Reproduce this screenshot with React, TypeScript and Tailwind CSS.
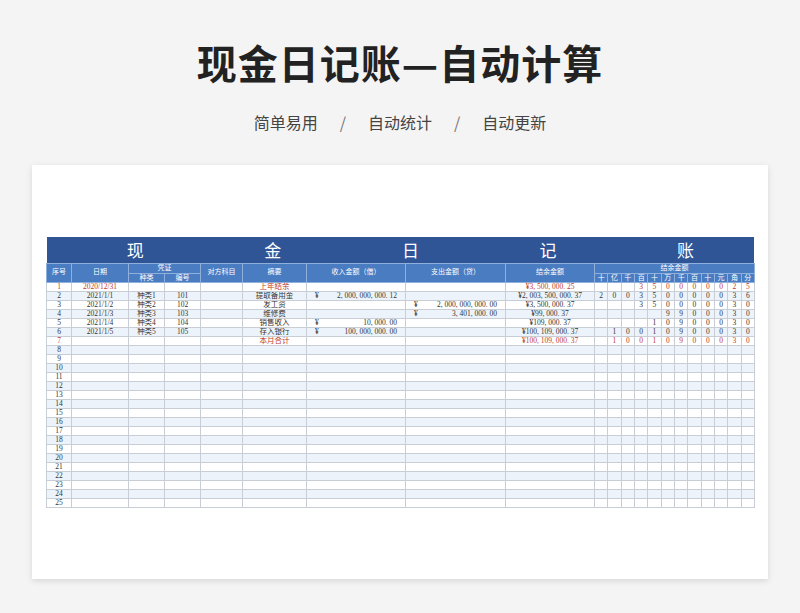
import React from "react";

const cols = [25, 57, 36, 36, 42, 64, 99, 100, 89, ...Array(12).fill(160 / 12)];
const digitsHead = ["十", "亿", "千", "百", "十", "万", "千", "百", "十", "元", "角", "分"];
type R = { d?: string; k?: string; n?: string; s?: string; inc?: string; out?: string; bal?: string; dg?: string; red?: boolean };
const data: R[] = [
  { d: "2020/12/31", s: "上年结余", bal: "¥3, 500, 000. 25", dg: "___350000025", red: true },
  { d: "2021/1/1", k: "种类1", n: "101", s: "提取备用金", inc: "2, 000, 000, 000. 12", bal: "¥2, 003, 500, 000. 37", dg: "200350000036" },
  { d: "2021/1/2", k: "种类2", n: "102", s: "发工资", out: "2, 000, 000, 000. 00", bal: "¥3, 500, 000. 37", dg: "___350000030" },
  { d: "2021/1/3", k: "种类3", n: "103", s: "维修费", out: "3, 401, 000. 00", bal: "¥99, 000. 37", dg: "_____9900030" },
  { d: "2021/1/4", k: "种类4", n: "104", s: "销售收入", inc: "10, 000. 00", bal: "¥109, 000. 37", dg: "____10900030" },
  { d: "2021/1/5", k: "种类5", n: "105", s: "存入银行", inc: "100, 000, 000. 00", bal: "¥100, 109, 000. 37", dg: "_10010900030" },
  { s: "本月合计", bal: "¥100, 109, 000. 37", dg: "_10010900030", red: true },
];

const td = "border border-[#c9ced6] h-[9px] p-0 leading-[8px] text-center overflow-hidden whitespace-nowrap";
const th = "border border-[#8fb0dd] p-0 text-center font-normal text-white whitespace-nowrap overflow-hidden";

export default function App() {
  const rows: R[] = [...data, ...Array(18).fill({})];
  return (
    <div className="w-[800px] h-[613px] bg-[#f4f4f4] flex flex-col items-center" style={{ fontFamily: '"Noto Sans CJK SC", sans-serif' }}>
      <h1 className="mt-[36px] text-[40px] leading-[52px] font-bold text-[#222] tracking-[1px]">现金日记账—自动计算</h1>
      <div className="mt-[22px] text-[16px] leading-[24px] text-[#444] flex gap-[22px]">
        <span>简单易用</span><span className="text-[#777]">/</span><span>自动统计</span><span className="text-[#777]">/</span><span>自动更新</span>
      </div>
      <div className="mt-[31px] w-[736px] h-[414px] bg-white shadow-[0_2px_6px_rgba(0,0,0,0.12)] pt-[72px] pl-[14px]">
        <table className="table-fixed border-collapse text-[7.5px] text-[#333]" style={{ width: 708, fontFamily: '"Liberation Serif", "Noto Sans CJK SC", serif' }}>
          <colgroup>{cols.map((w, i) => <col key={i} style={{ width: w }} />)}</colgroup>
          <thead>
            <tr className="bg-[#2f5597] h-[25px]">
              <th colSpan={21} className="p-0 font-normal text-white text-[17px]">
                <div className="flex justify-around pl-[20px]" style={{ fontFamily: '"Noto Sans CJK SC", serif' }}>
                  {["现", "金", "日", "记", "账"].map((c) => <span key={c}>{c}</span>)}
                </div>
              </th>
            </tr>
            <tr className="bg-[#4a7cc2] h-[10px] leading-[9px] text-[7px]">
              <th rowSpan={2} className={th}>序号</th>
              <th rowSpan={2} className={th}>日期</th>
              <th colSpan={2} className={th}>凭证</th>
              <th rowSpan={2} className={th}>对方科目</th>
              <th rowSpan={2} className={th}>摘要</th>
              <th rowSpan={2} className={th}>收入金额（借）</th>
              <th rowSpan={2} className={th}>支出金额（贷）</th>
              <th rowSpan={2} className={th}>结余金额</th>
              <th colSpan={12} className={th}>结余金额</th>
            </tr>
            <tr className="bg-[#4a7cc2] h-[9px] leading-[8px] text-[7px]">
              <th className={th}>种类</th>
              <th className={th}>编号</th>
              {digitsHead.map((c, i) => <th key={i} className={th}>{c}</th>)}
            </tr>
          </thead>
          <tbody>
            {rows.map((r, i) => {
              const red = r.red ? "text-[#c0392b]" : "";
              const dg = r.dg ? r.dg.split("") : Array(12).fill("_");
              return (
                <tr key={i} className={i % 2 === 1 ? "bg-[#edf3fb]" : "bg-white"}>
                  <td className={`${td} ${red}`}>{i + 1}</td>
                  <td className={`${td} ${red}`}>{r.d}</td>
                  <td className={td}>{r.k}</td>
                  <td className={td}>{r.n}</td>
                  <td className={td}></td>
                  <td className={`${td} ${red}`}>{r.s}</td>
                  <td className={td}>{r.inc && <div className="flex justify-between px-[8px]"><span>¥</span><span>{r.inc}</span></div>}</td>
                  <td className={td}>{r.out && <div className="flex justify-between px-[8px]"><span>¥</span><span>{r.out}</span></div>}</td>
                  <td className={`${td} ${red}`}>{r.bal}</td>
                  {dg.map((c, j) => <td key={j} className={`${td} ${red}`}>{c === "_" ? "" : c}</td>)}
                </tr>
              );
            })}
          </tbody>
        </table>
      </div>
    </div>
  );
}
